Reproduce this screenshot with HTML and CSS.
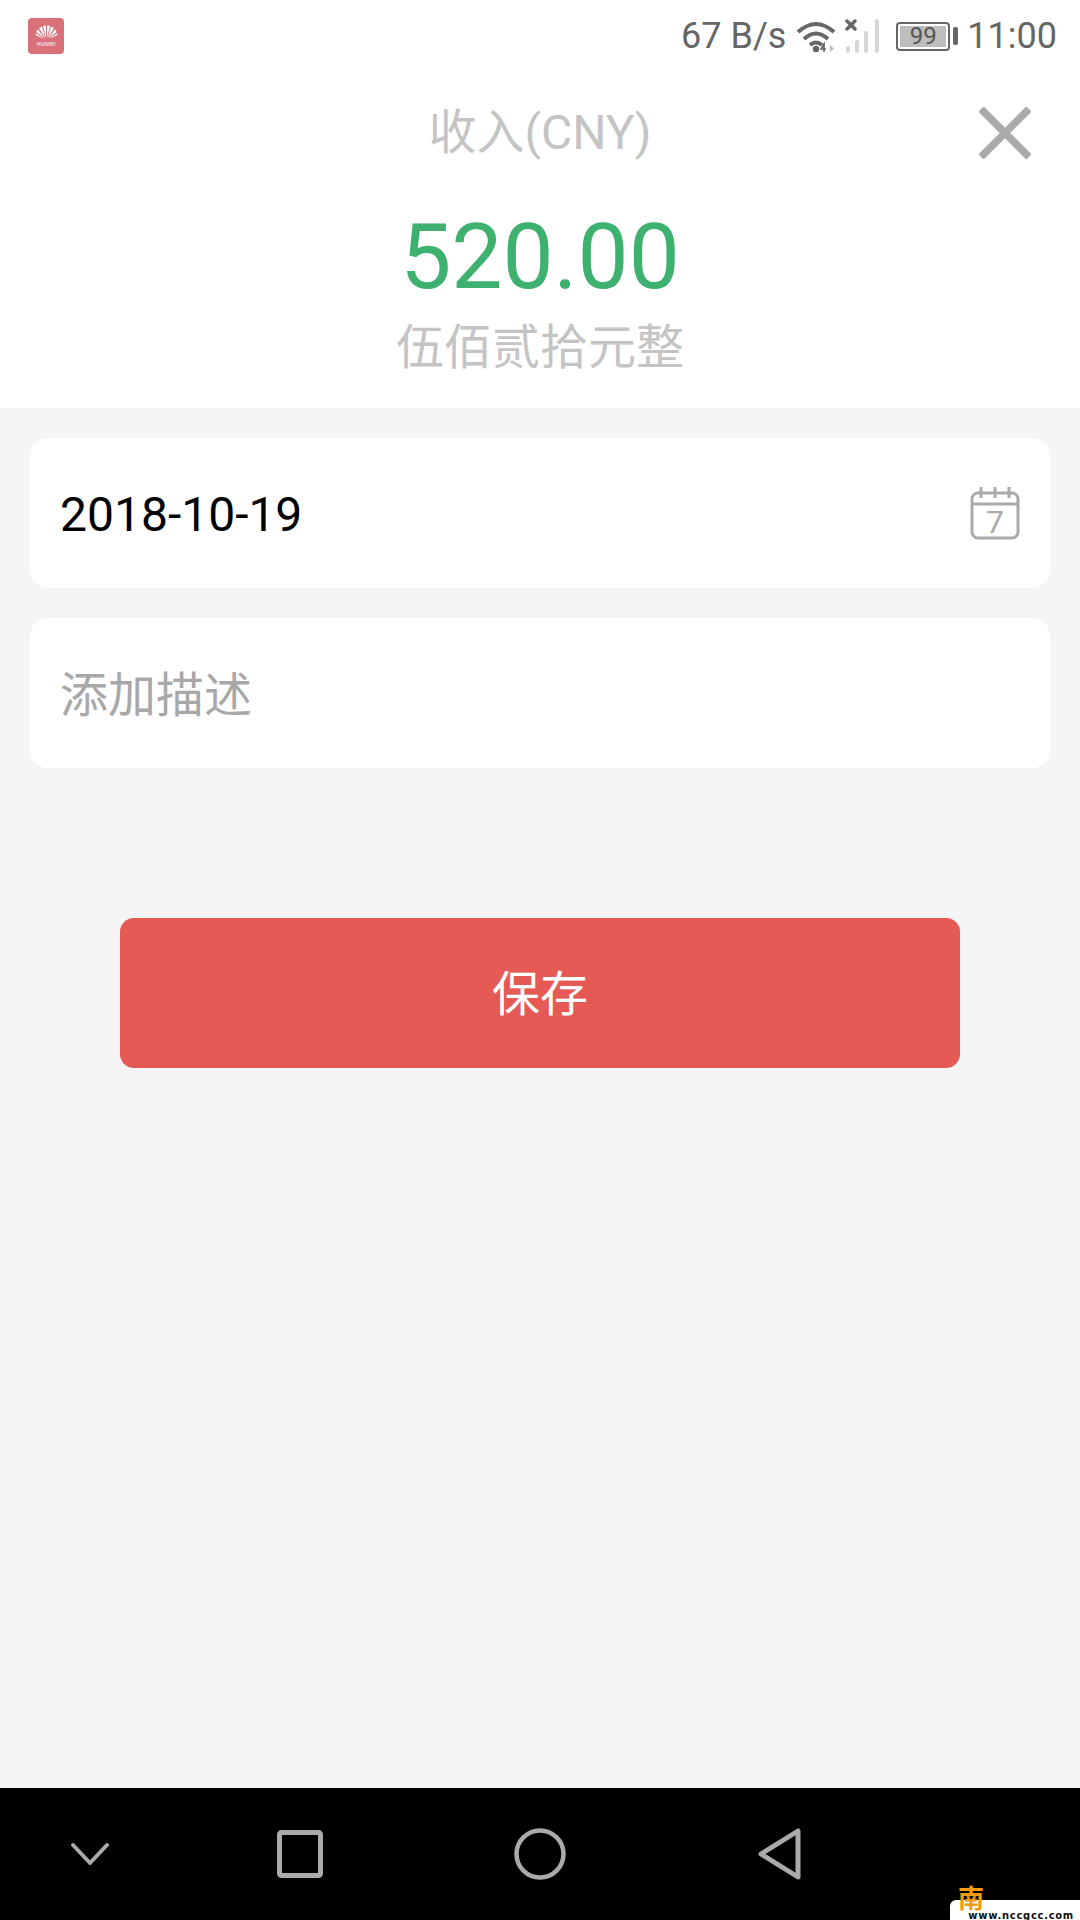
FILE: index.html
```html
<!DOCTYPE html>
<html lang="zh-CN">
<head>
    <meta charset="UTF-8">
    <meta name="viewport" content="width=device-width, initial-scale=1.0">
    <title>收入</title>
    <link rel="stylesheet" href="styles.css">
</head>
<body>

    <div class="page">
        <div class="top">
            <!-- Status bar -->
            <div class="status">
                <div class="brand">
                    <svg width="28" height="17" viewBox="0 0 28 17" fill="#fff">
                        <path d="M13.4 16 9.8 1.5Q11.8 0 13.4 .8Z"/>
                        <path d="M14.6 16 18.2 1.5Q16.2 0 14.6 .8Z"/>
                        <path d="M12.5 16 5 4Q6.5 2 8.6 2Z"/>
                        <path d="M15.5 16 23 4Q21.5 2 19.4 2Z"/>
                        <path d="M11.5 16 1.8 8.5Q2.2 6.5 3.6 5.500Z"/>
                        <path d="M16.5 16 26.2 8.5Q25.8 6.5 24.4 5.500Z"/>
                        <path d="M10.5 16.6 1 12.6Q.8 11.4 1.2 10Z"/>
                        <path d="M17.5 16.6 27 12.6Q27.2 11.4 26.8 10Z"/>
                    </svg>
                    <span class="brand-name">HUAWEI</span>
                </div>
                <div class="status-right">
                    <span class="speed">67 B/s</span>
                    <svg class="wifi" width="40" height="34" viewBox="0 0 40 34" fill="none" stroke="#666" stroke-width="4">
                        <path d="M2 13Q20 -3 38 13"/>
                        <path d="M8 20Q20 9 32 20"/>
                        <path d="M14 26Q20 21 26 26"/>
                        <circle cx="20" cy="30" r="3.2" fill="#666" stroke="none"/>
                        <path d="M28 33V25L25 30H30" stroke-width="1.6"/>
                        <path d="M34 26V33L38 29.5Z" fill="#bbb" stroke="none"/>
                    </svg>
                    <svg class="signal" width="36" height="34" viewBox="0 0 36 34" stroke-linecap="round">
                        <g stroke="#d6d6d6" stroke-width="4">
                            <path d="M3 29V32"/>
                            <path d="M12 23V32"/>
                            <path d="M21 14V32"/>
                            <path d="M32 2V32"/>
                        </g>
                        <path d="M2 2 10 10M10 2 2 10" stroke="#666" stroke-width="3.4"/>
                    </svg>
                    <div class="battery">
                        <div class="battery-body"><span class="battery-fill">99</span></div>
                        <div class="battery-nub"></div>
                    </div>
                    <span class="clock">11:00</span>
                </div>
            </div>

            <div class="title-row">
                <div class="title">收入(CNY)</div>
                <svg class="close" width="52" height="52" viewBox="0 0 52 52" stroke="#aaa" stroke-width="7.5">
                    <path d="M2 2 50 50M50 2 2 50"/>
                </svg>
            </div>
            <div class="amount">520.00</div>
            <div class="amount-cn">伍佰贰拾元整</div>
        </div>

        <div class="content">
            <div class="card">
                <span class="date">2018-10-19</span>
                <svg class="calendar" width="50" height="54" viewBox="0 0 50 54" fill="none" stroke="#aaa" stroke-width="3">
                    <rect x="2" y="7" width="46" height="45" rx="6"/>
                    <path d="M2 18H48" stroke-width="3"/>
                    <path d="M11 1V12M25 1V12M39 1V12"/>
                    <text class="calendar-day" x="25" y="47" text-anchor="middle">7</text>
                </svg>
            </div>
            <div class="card">
                <span class="hint">添加描述</span>
            </div>
            <div class="save">保存</div>
        </div>

        <div class="nav">
            <svg width="40" height="24" viewBox="0 0 40 24" fill="none" stroke="#aaa" stroke-width="4" stroke-linecap="round" stroke-linejoin="round">
                <path d="M3 3 20 21 37 3"/>
            </svg>
            <svg width="46" height="48" viewBox="0 0 46 48" fill="none" stroke="#aaa" stroke-width="5">
                <rect x="2.500" y="2.500" width="41" height="43" rx="2"/>
            </svg>
            <svg width="52" height="52" viewBox="0 0 52 52" fill="none" stroke="#aaa" stroke-width="4.500">
                <circle cx="26" cy="26" r="23.500"/>
            </svg>
            <svg width="44" height="52" viewBox="0 0 44 52" fill="none" stroke="#aaa" stroke-width="5" stroke-linejoin="round">
                <path d="M40 3V49L3 26Z"/>
            </svg>
            <div class="mark">
                <span class="mark-char">南</span>
                <span class="mark-url">www.nccgcc.com</span>
            </div>
        </div>
    </div>

</body>
</html>
```

FILE: styles.css
```css
* {
    box-sizing: border-box;
}
body {
    margin: 0;
    padding: 0;
    font-family: Roboto, "Noto Sans CJK SC", sans-serif;
    background-color: #f5f5f5;
}
.page {
    width: 1080px;
    height: 1920px;
    display: flex;
    flex-direction: column;
    overflow: hidden;
}
.top {
    height: 408px;
    background-color: #fff;
    text-align: center;
}
.status {
    height: 72px;
    display: flex;
    justify-content: space-between;
    align-items: center;
    padding: 0 23px 0 28px;
}
.brand {
    width: 36px;
    height: 36px;
    background-color: #d9707a;
    border-radius: 4px;
    display: flex;
    flex-direction: column;
    align-items: center;
    padding-top: 6px;
    overflow: hidden;
}
.brand svg {
    width: 23px;
    height: 16px;
}
.brand-name {
    font-size: 5px;
    line-height: 8px;
    color: #fff;
}
.status-right {
    display: flex;
    align-items: center;
    color: #666;
    font-size: 36px;
}
.wifi {
    margin-left: 10px;
}
.signal {
    margin-left: 9px;
}
.battery {
    display: flex;
    align-items: center;
    margin-left: 15px;
    gap: 3px;
}
.battery-body {
    width: 54px;
    height: 29px;
    border: 2px solid #666;
    border-radius: 4px;
    padding: 2px;
}
.battery-fill {
    display: block;
    height: 21px;
    background-color: #bdbdbd;
    font-size: 24px;
    line-height: 21px;
    text-align: center;
    color: #555;
}
.battery-nub {
    width: 5px;
    height: 18px;
    background-color: #666;
    border-radius: 2px;
}
.clock {
    margin-left: 9px;
}
.title-row {
    display: grid;
    grid-template-columns: 1fr auto 1fr;
    align-items: center;
    height: 122px;
}
.title {
    grid-column: 2;
    font-size: 48px;
    color: #c4c4c4;
    margin-bottom: 10px;
}
.close {
    justify-self: end;
    margin-right: 49px;
}
.amount {
    font-size: 91px;
    line-height: 100px;
    color: #3eb06f;
    margin-top: 13px;
}
.amount-cn {
    font-size: 48px;
    line-height: 70px;
    color: #c4c4c4;
    margin-top: 6px;
}
.content {
    flex: 1;
    padding: 30px 30px 0;
    display: flex;
    flex-direction: column;
    gap: 30px;
}
.card {
    height: 150px;
    background-color: #fff;
    border-radius: 18px;
    display: flex;
    justify-content: space-between;
    align-items: center;
    padding: 0 30px;
}
.date {
    font-size: 48px;
    color: #000;
    margin-top: 2px;
}
.hint {
    font-size: 48px;
    color: #a8a8a8;
    margin-bottom: 4px;
}
.calendar-day {
    font-family: Roboto, sans-serif;
    font-size: 32px;
    fill: #aaa;
    stroke: none;
}
.save {
    width: 840px;
    height: 150px;
    margin: 120px auto 0;
    background-color: #e55a54;
    border-radius: 14px;
    color: #fff;
    font-size: 48px;
    line-height: 154px;
    text-align: center;
}
.nav {
    position: relative;
    height: 132px;
    background-color: #000;
    display: grid;
    grid-template-columns: 180px repeat(3, 240px);
    justify-items: center;
    align-items: center;
}
/* watermark sits over the corner of the bar */
.mark {
    position: absolute;
    right: 0;
    bottom: 0;
    width: 130px;
    height: 20px;
    background-color: #fff;
    border-radius: 6px 0 0 0;
    text-align: right;
    padding-right: 6px;
}
.mark-char {
    position: absolute;
    left: 8px;
    top: -11px;
    font-size: 26px;
    line-height: 20px;
    font-weight: 700;
    color: #f09a10;
}
.mark-url {
    display: block;
    margin-top: 11px;
    font-family: "DejaVu Sans", sans-serif;
    font-size: 10px;
    line-height: 9px;
    font-weight: 700;
    letter-spacing: 0.7px;
    color: #111;
}
```
